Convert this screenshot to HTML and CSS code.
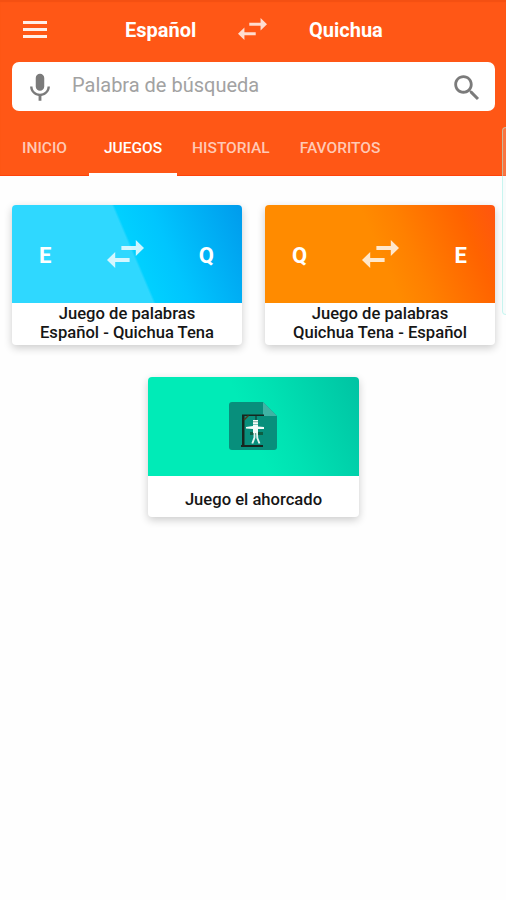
FILE: index.html
```
<!DOCTYPE html>
<html lang="es">

<head>
    <meta charset="UTF-8">
    <meta name="viewport" content="width=device-width, initial-scale=1.0">
    <title>Diccionario Español - Quichua</title>
    <link rel="stylesheet" href="styles.css">
</head>

<body>

    <svg class="sprite" width="0" height="0">
        <symbol id="swap" viewBox="3 5 18 14" preserveAspectRatio="none">
            <path d="M6.99 11L3 15l3.99 4v-3H14v-2H6.99v-3zM21 9l-3.99-4v3H10v2h7.01v3L21 9z" />
        </symbol>
    </svg>

    <header class="header">
        <div class="idiomas">
            <svg class="menu" viewBox="0 0 24 17">
                <path d="M0 0h24v3H0zM0 7h24v3H0zM0 14h24v3H0z" />
            </svg>
            <span class="idioma origen">Español</span>
            <svg class="cambiar"><use href="#swap" /></svg>
            <span class="idioma destino">Quichua</span>
        </div>

        <div class="buscador">
            <svg class="icono" viewBox="0 0 24 24">
                <path d="M12 14c1.66 0 2.99-1.34 2.99-3L15 5c0-1.66-1.34-3-3-3S9 3.34 9 5v6c0 1.66 1.34 3 3 3zm5.3-3c0 3-2.54 5.1-5.3 5.1S6.7 14 6.7 11H5c0 3.41 2.72 6.23 6 6.72V21h2v-3.28c3.28-.48 6-3.3 6-6.72h-1.7z" />
            </svg>
            <span class="texto">Palabra de búsqueda</span>
            <svg class="icono" viewBox="0 0 24 24">
                <path d="M15.5 14h-.79l-.28-.27C15.41 12.59 16 11.11 16 9.5 16 5.91 13.09 3 9.5 3S3 5.91 3 9.5 5.91 16 9.5 16c1.61 0 3.09-.59 4.23-1.57l.27.28v.79l5 4.99L20.49 19l-4.99-5zm-6 0C7.01 14 5 11.99 5 9.5S7.01 5 9.5 5 14 7.01 14 9.5 11.99 14 9.5 14z" />
            </svg>
        </div>

        <nav class="tabs">
            <a class="tab">INICIO</a>
            <a class="tab activo">JUEGOS</a>
            <a class="tab">HISTORIAL</a>
            <a class="tab">FAVORITOS</a>
        </nav>
    </header>

    <main class="juegos">
        <div class="fila">
            <div class="card">
                <div class="portada azul">
                    <span>E</span>
                    <svg class="flechas"><use href="#swap" /></svg>
                    <span>Q</span>
                </div>
                <p class="titulo">Juego de palabras<br>Español - Quichua Tena</p>
            </div>
            <div class="card">
                <div class="portada naranja">
                    <span>Q</span>
                    <svg class="flechas"><use href="#swap" /></svg>
                    <span>E</span>
                </div>
                <p class="titulo">Juego de palabras<br>Quichua Tena - Español</p>
            </div>
        </div>

        <div class="card ahorcado">
            <div class="portada verde">
                <svg class="dibujo" viewBox="0 0 48 48">
                    <!-- hoja con la esquina doblada -->
                    <path fill="#088f7c" d="M3 0h31l14 14v31a3 3 0 0 1-3 3H3a3 3 0 0 1-3-3V3a3 3 0 0 1 3-3z" />
                    <path fill="#3fb3a4" d="M34 0l14 14H34z" />
                    <!-- horca -->
                    <path fill="#16261f" d="M13 12.500h22V14H15.500v29H34v2H12v-2h1z" />
                    <path stroke="#4a3a1c" stroke-width="1.500" d="M15 18l4.500-4.500" />
                    <path stroke="#16261f" d="M27 14v4" />
                    <!-- monigote -->
                    <path fill="#0c5e43" d="M21 30h13v3H21z" />
                    <path fill="#f4fbf9" d="M24 18h5v4h-5zM24 22.500h5v2l6 .5v2h-6v4h-5v-4l-7-.5v-1.500l7-1z" />
                    <path fill="none" stroke="#e4f5f1" stroke-width="1.900" d="M25.500 31v4.500L23.300 41.500M28 31l.3 5 2.200 5.500" />
                    <path fill="#7fa69c" d="M24 19.200h5v1h-5z" />
                </svg>
            </div>
            <p class="titulo">Juego el ahorcado</p>
        </div>
    </main>

    <div class="panel-borde"></div>

</body>

</html>
```
FILE: styles.css
```
body {
    margin: 0;
    min-height: 900px;
    background-color: #fefefe;
    font-family: Roboto, sans-serif;
    position: relative;
    overflow: hidden;
}

.sprite {
    position: absolute;
}

.header {
    height: 176px;
    box-sizing: border-box;
    background-color: #ff5716;
    border-bottom: 1px solid #ff430a;
    box-shadow: inset 0 2px 1px #f45012;
    color: white;
}

.idiomas {
    display: flex;
    align-items: center;
    height: 58px;
    padding: 0 23px;
    margin-bottom: 4px;
}

.menu {
    width: 24px;
    height: 17px;
    fill: #ffeee8;
}

.idioma {
    font-size: 20px;
    font-weight: 700;
    line-height: 24px;
    padding-top: 2px;
}

.origen {
    width: 113px;
    margin-left: 78px;
}

.cambiar {
    width: 29px;
    height: 22px;
    fill: #ffddd0;
}

.destino {
    margin-left: 42px;
}

.buscador {
    display: flex;
    align-items: center;
    height: 49px;
    margin: 0 11px 0 12px;
    padding: 2px 11px 0;
    box-sizing: border-box;
    border-radius: 7px;
    background-color: white;
}

.icono {
    width: 34px;
    height: 34px;
    fill: #7b7b7b;
}

.texto {
    flex: 1;
    margin-left: 15px;
    margin-bottom: 5px;
    font-size: 20px;
    color: #a2a2a2;
}

.tabs {
    display: flex;
    height: 65px;
}

.tab {
    box-sizing: border-box;
    padding: 8px 15px 0;
    line-height: 59px;
    font-size: 15.5px;
    font-weight: 500;
    color: #ffc9b5;
}

.tab:first-child {
    padding-left: 22px;
    padding-right: 22px;
}

.tab.activo {
    color: white;
    border-bottom: 3px solid white;
}

.juegos {
    padding: 29px 11px 0 12px;
}

.fila {
    display: flex;
    gap: 23px;
}

.card {
    flex: 1;
    height: 140px;
    border-radius: 4px;
    overflow: hidden;
    background-color: white;
    box-shadow: 0 3px 8px rgba(0, 0, 0, 0.2);
}

.portada {
    display: flex;
    align-items: center;
    justify-content: space-between;
    height: 98px;
    padding: 2px 28px 0 27px;
    box-sizing: border-box;
    color: white;
    font-size: 22px;
    font-weight: 700;
}

.flechas {
    width: 37px;
    height: 28px;
    margin-bottom: 2px;
    fill: rgba(255, 255, 255, 0.8);
}

.azul {
    background: linear-gradient(67deg, #2fd8ff 52%, #00d0ff 53%, #00c5fe 66%, #009bec 100%);
}

.naranja {
    background: linear-gradient(67deg, #ff8b00 50%, #ff8000 62%, #ff6300 86%, #ff5510 100%);
}

.verde {
    background: linear-gradient(67deg, #00ebb7 48%, #00e2b3 62%, #00c3a3 100%);
}

.titulo {
    margin: 0;
    padding-top: 1px;
    text-align: center;
    font-size: 16.6px;
    font-weight: 500;
    line-height: 19px;
    color: #161616;
}

.ahorcado {
    width: 211px;
    height: 140px;
    margin: 32px auto 0;
}

.ahorcado .portada {
    justify-content: center;
    padding: 0 1px 1px 0;
    height: 99px;
}

.ahorcado .titulo {
    line-height: 45px;
}

.dibujo {
    width: 48px;
    height: 48px;
}

/* pestaña del panel lateral del teléfono */
.panel-borde {
    position: absolute;
    right: -4px;
    top: 127px;
    width: 6px;
    height: 186px;
    border: 1px solid rgba(160, 240, 232, 0.55);
    border-radius: 4px;
    background-color: rgba(225, 240, 240, 0.2);
}
```
